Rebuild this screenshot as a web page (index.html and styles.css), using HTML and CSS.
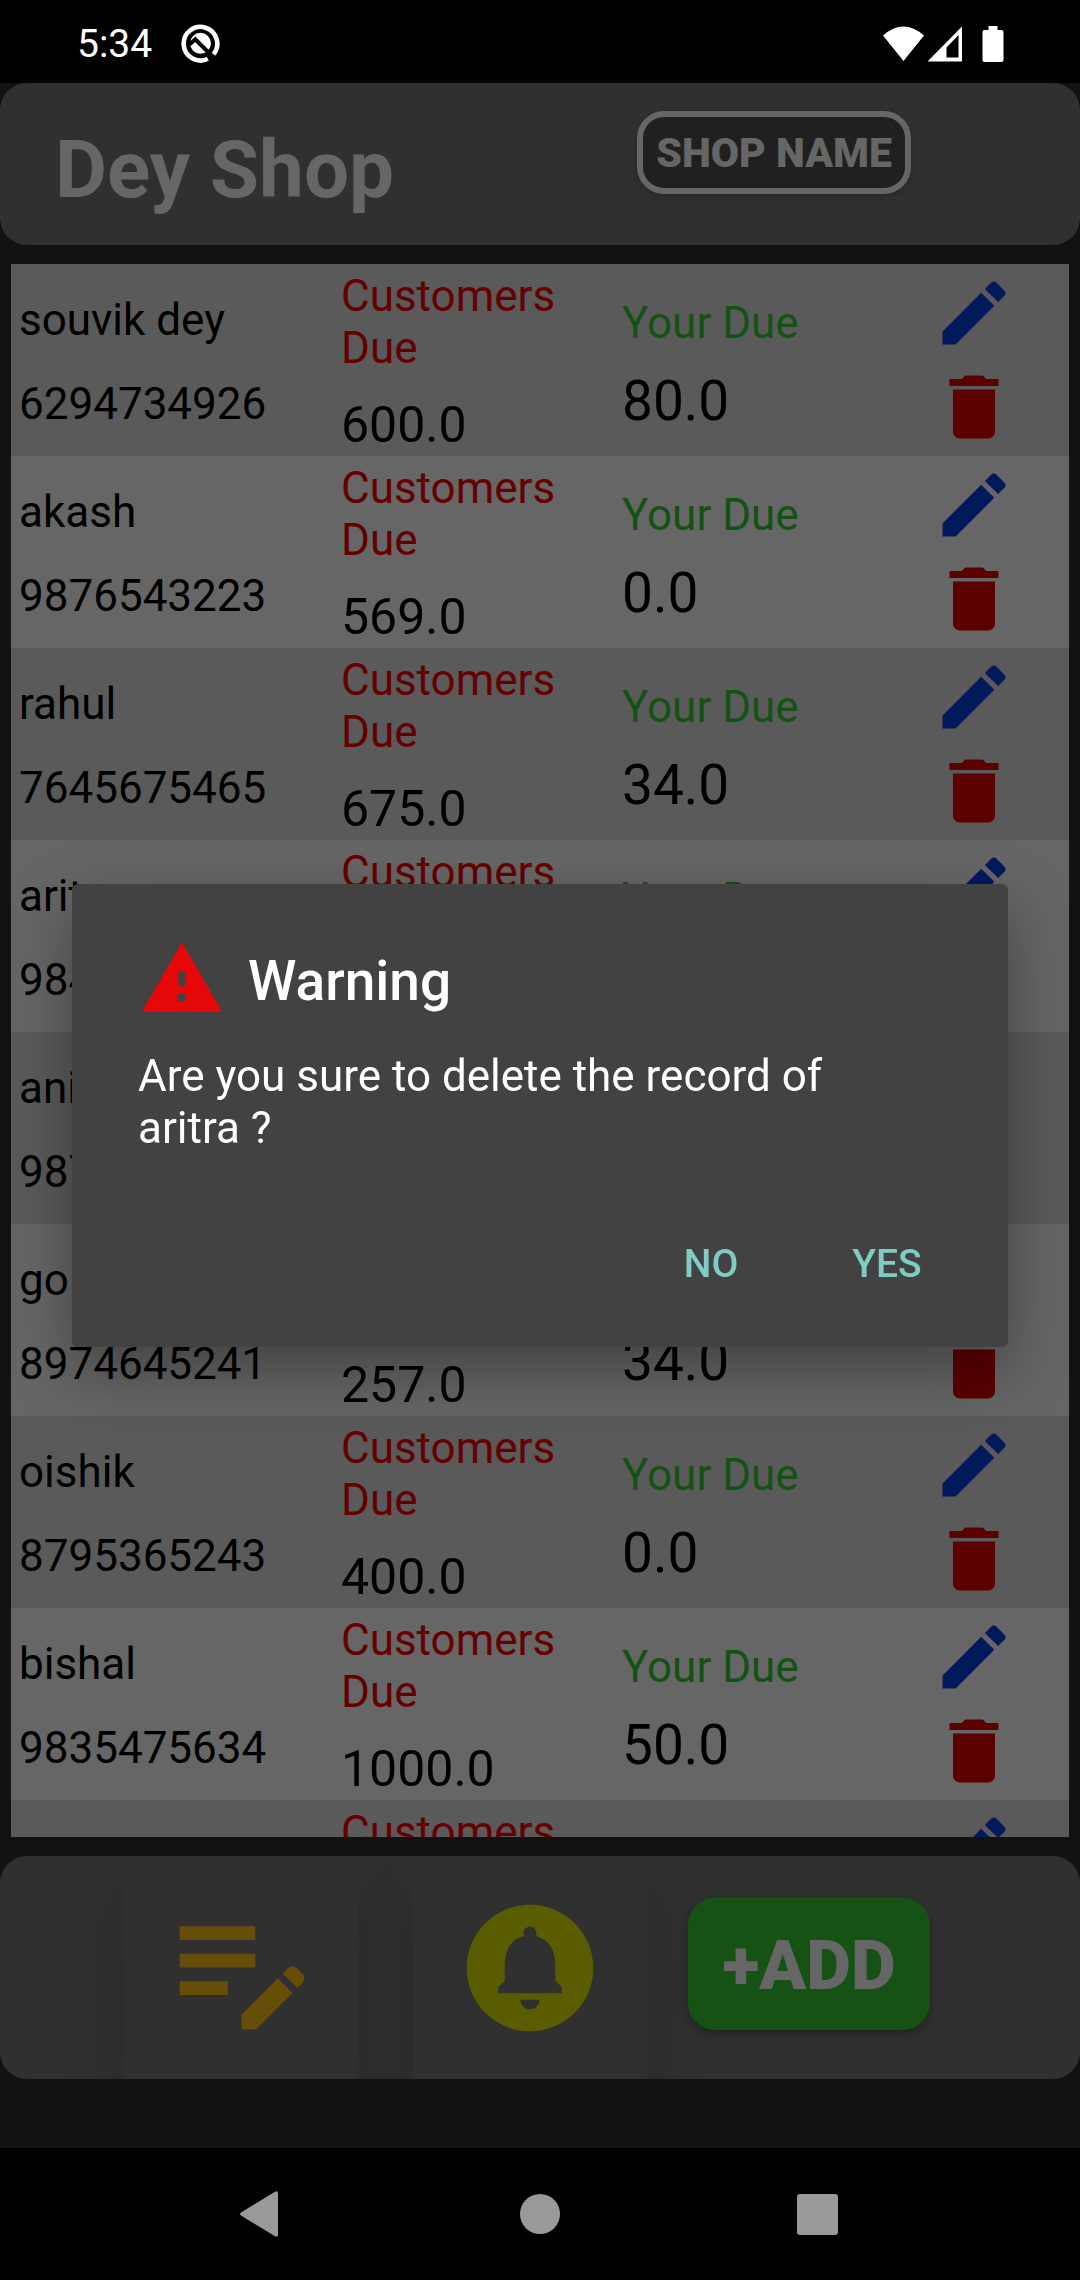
FILE: index.html
```html
<!DOCTYPE html>
<html lang="en">
<head>
<meta charset="utf-8">
<meta name="viewport" content="width=device-width, initial-scale=1">
<title>Dey Shop</title>
<link rel="stylesheet" href="styles.css">
</head>
<body>
<svg class="sprite" aria-hidden="true">
  <symbol id="edit" viewBox="0 0 24 24"><path d="M3 17.25V21h3.75L17.81 9.94l-3.75-3.75L3 17.25zM20.71 7.04c.39-.39.39-1.02 0-1.41l-2.34-2.34c-.39-.39-1.02-.39-1.41 0l-1.83 1.83 3.75 3.75 1.83-1.83z"/></symbol>
  <symbol id="trash" viewBox="0 0 24 24"><path d="M6 19c0 1.1.9 2 2 2h8c1.1 0 2-.9 2-2V7H6v12zM19 4h-3.5l-1-1h-5l-1 1H5v2h14V4z"/></symbol>
</svg>

<div class="status">
  <span class="clock">5:34</span>
  <svg class="status-app" viewBox="0 0 39 39" aria-hidden="true">
    <path d="M32.4 30.4A16.800 16.800 0 1 0 26.800 34.800" fill="none" stroke="#fff" stroke-width="4.600"/>
    <circle cx="19.500" cy="19.300" r="10.500" fill="#fff"/>
    <path d="M8.500 20.500L14.300 15.300L33 34" fill="none" stroke="#000" stroke-width="4"/>
  </svg>
  <svg class="status-signals" viewBox="0 0 121 36" aria-hidden="true">
    <path fill="#fff" d="M0 9.500Q20.500-8.500 41 9.500L20.500 35z"/>
    <path fill="#fff" fill-rule="evenodd" d="M44.500 35.500L79 .5v35zM63.500 21.500v10h12V9z"/>
    <path fill="#fff" d="M105.500 0h9v4h4q2 0 2 2v28q0 2-2 2h-17q-2 0-2-2V6q0-2 2-2h4z"/>
  </svg>
</div>

<div class="app">
  <header class="header">
    <h1 class="title">Dey Shop</h1>
    <button class="shop-name" type="button">SHOP NAME</button>
  </header>

  <main class="list-wrap">
    <ul class="list">
      <li class="row">
        <div class="who"><span>souvik dey</span><span>6294734926</span></div>
        <div class="owed"><span class="label-red">Customers Due</span><span class="amount">600.0</span></div>
        <div class="owing"><span class="label-green">Your Due</span><span class="amount-large">80.0</span></div>
        <div class="actions">
          <button type="button" class="icon-btn edit" aria-label="Edit"><svg><use href="#edit"/></svg></button>
          <button type="button" class="icon-btn trash" aria-label="Delete"><svg><use href="#trash"/></svg></button>
        </div>
      </li>
      <li class="row">
        <div class="who"><span>akash</span><span>9876543223</span></div>
        <div class="owed"><span class="label-red">Customers Due</span><span class="amount">569.0</span></div>
        <div class="owing"><span class="label-green">Your Due</span><span class="amount-large">0.0</span></div>
        <div class="actions">
          <button type="button" class="icon-btn edit" aria-label="Edit"><svg><use href="#edit"/></svg></button>
          <button type="button" class="icon-btn trash" aria-label="Delete"><svg><use href="#trash"/></svg></button>
        </div>
      </li>
      <li class="row">
        <div class="who"><span>rahul</span><span>7645675465</span></div>
        <div class="owed"><span class="label-red">Customers Due</span><span class="amount">675.0</span></div>
        <div class="owing"><span class="label-green">Your Due</span><span class="amount-large">34.0</span></div>
        <div class="actions">
          <button type="button" class="icon-btn edit" aria-label="Edit"><svg><use href="#edit"/></svg></button>
          <button type="button" class="icon-btn trash" aria-label="Delete"><svg><use href="#trash"/></svg></button>
        </div>
      </li>
      <li class="row">
        <div class="who"><span>aritra</span><span>9845612378</span></div>
        <div class="owed"><span class="label-red">Customers Due</span><span class="amount">300.0</span></div>
        <div class="owing"><span class="label-green">Your Due</span><span class="amount-large">0.0</span></div>
        <div class="actions">
          <button type="button" class="icon-btn edit" aria-label="Edit"><svg><use href="#edit"/></svg></button>
          <button type="button" class="icon-btn trash" aria-label="Delete"><svg><use href="#trash"/></svg></button>
        </div>
      </li>
      <li class="row">
        <div class="who"><span>anik</span><span>9876512340</span></div>
        <div class="owed"><span class="label-red">Customers Due</span><span class="amount">450.0</span></div>
        <div class="owing"><span class="label-green">Your Due</span><span class="amount-large">0.0</span></div>
        <div class="actions">
          <button type="button" class="icon-btn edit" aria-label="Edit"><svg><use href="#edit"/></svg></button>
          <button type="button" class="icon-btn trash" aria-label="Delete"><svg><use href="#trash"/></svg></button>
        </div>
      </li>
      <li class="row">
        <div class="who"><span>go das</span><span>8974645241</span></div>
        <div class="owed"><span class="label-red">Customers Due</span><span class="amount">257.0</span></div>
        <div class="owing"><span class="label-green">Your Due</span><span class="amount-large">34.0</span></div>
        <div class="actions">
          <button type="button" class="icon-btn edit" aria-label="Edit"><svg><use href="#edit"/></svg></button>
          <button type="button" class="icon-btn trash" aria-label="Delete"><svg><use href="#trash"/></svg></button>
        </div>
      </li>
      <li class="row">
        <div class="who"><span>oishik</span><span>8795365243</span></div>
        <div class="owed"><span class="label-red">Customers Due</span><span class="amount">400.0</span></div>
        <div class="owing"><span class="label-green">Your Due</span><span class="amount-large">0.0</span></div>
        <div class="actions">
          <button type="button" class="icon-btn edit" aria-label="Edit"><svg><use href="#edit"/></svg></button>
          <button type="button" class="icon-btn trash" aria-label="Delete"><svg><use href="#trash"/></svg></button>
        </div>
      </li>
      <li class="row">
        <div class="who"><span>bishal</span><span>9835475634</span></div>
        <div class="owed"><span class="label-red">Customers Due</span><span class="amount">1000.0</span></div>
        <div class="owing"><span class="label-green">Your Due</span><span class="amount-large">50.0</span></div>
        <div class="actions">
          <button type="button" class="icon-btn edit" aria-label="Edit"><svg><use href="#edit"/></svg></button>
          <button type="button" class="icon-btn trash" aria-label="Delete"><svg><use href="#trash"/></svg></button>
        </div>
      </li>
      <li class="row">
        <div class="who"></div>
        <div class="owed"><span class="label-red">Customers Due</span></div>
        <div class="owing"></div>
        <div class="actions">
          <button type="button" class="icon-btn edit" aria-label="Edit"><svg><use href="#edit"/></svg></button>
        </div>
      </li>
    </ul>
  </main>

  <footer class="toolbar">
    <button type="button" class="tile notes" aria-label="Notes">
      <svg viewBox="0 0 24 24"><path d="M3 10h11v2H3v-2zm0-2h11V6H3v2zm0 8h7v-2H3v2zm15.010-3.130.710-.710c.390-.390 1.020-.390 1.410 0l.710.710c.390.390.390 1.020 0 1.410l-.710.710-2.120-2.120zm-.710.710-5.300 5.300V21h2.120l5.300-5.300-2.120-2.120z"/></svg>
    </button>
    <button type="button" class="tile alerts" aria-label="Notifications">
      <svg viewBox="0 0 24 24"><path d="M12 2C6.480 2 2 6.480 2 12s4.480 10 10 10 10-4.480 10-10S17.520 2 12 2zm0 16.500c-.830 0-1.500-.670-1.500-1.500h3c0 .830-.670 1.500-1.500 1.500zm5-2.500H7v-1l1-1v-2.610C8 9.270 9.030 7.470 11 7v-.500c0-.570.430-1 1-1s1 .430 1 1V7c1.970.470 3 2.280 3 4.390V14l1 1v1z"/></svg>
    </button>
    <button type="button" class="add">+ADD</button>
  </footer>

  <div class="overlay">
    <section class="dialog" role="alertdialog" aria-labelledby="dlg-title" aria-describedby="dlg-text">
      <div class="dialog-head">
        <svg class="warn" viewBox="0 0 24 24" aria-hidden="true"><path d="M1 21h22L12 2 1 21zm12-3h-2v-2h2v2zm0-4h-2v-4h2v4z"/></svg>
        <h2 class="dialog-title" id="dlg-title">Warning</h2>
      </div>
      <p class="dialog-text" id="dlg-text">Are you sure to delete the record of aritra&nbsp;?</p>
      <div class="dialog-actions">
        <button type="button" class="text-btn">NO</button>
        <button type="button" class="text-btn">YES</button>
      </div>
    </section>
  </div>
</div>

<nav class="nav">
  <button type="button" aria-label="Back"><svg viewBox="2 0 44 46"><path d="M3 21.500L37 .8q3-1.500 3 1.500v41.400q0 3-3 1.500L3 24.500q-2-1.500 0-3z"/></svg></button>
  <button type="button" aria-label="Home"><svg viewBox="0 0 44 46"><circle cx="22" cy="23" r="20"/></svg></button>
  <button type="button" aria-label="Recents"><svg viewBox="0 0 44 46"><rect x="1" y="3" width="41" height="41" rx="3"/></svg></button>
</nav>
</body>
</html>
```
FILE: styles.css
```css
* {
  box-sizing: border-box;
}

body {
  margin: 0;
  height: 100vh;
  display: flex;
  flex-direction: column;
  background: #000;
  font-family: Roboto, "Liberation Sans", sans-serif;
}

button {
  padding: 0;
  border: 0;
  background: none;
  font-family: inherit;
  cursor: pointer;
}

svg {
  display: block;
}

.sprite {
  position: absolute;
  width: 0;
  height: 0;
}

/* Status bar */
.status {
  flex: none;
  height: 83px;
  padding: 4px 76px 0 77px;
  display: flex;
  align-items: center;
  color: #fff;
}

.clock {
  font-size: 39px;
  line-height: 46px;
}

.status-app {
  width: 39px;
  height: 39px;
  margin-left: 29px;
}

.status-signals {
  width: 121px;
  height: 36px;
  margin-left: auto;
}

/* App area */
.app {
  position: relative;
  flex: 1;
  min-height: 0;
  display: flex;
  flex-direction: column;
  padding-bottom: 69px;
  background: #121212;
}

.header {
  flex: none;
  height: 162px;
  padding: 28px 169px 0 55px;
  display: flex;
  justify-content: space-between;
  align-items: flex-start;
  border-radius: 27px;
  background: #303030;
}

.title {
  margin: 12px 0 0;
  font-size: 80px;
  line-height: 94px;
  font-weight: 700;
  color: #666;
}

.shop-name {
  height: 83px;
  padding: 0 13px;
  border: 6px solid #666;
  border-radius: 27px;
  background: #202020;
  box-shadow: 0 2px 6px rgba(0, 0, 0, .2);
  color: #666;
  font-size: 41px;
  font-weight: 900;
}

.list-wrap {
  flex: 1;
  min-height: 0;
  margin: 19px 11px;
  overflow-y: auto;
  scrollbar-width: none;
}

.list {
  margin: 0;
  padding: 0;
  list-style: none;
}

.row {
  height: 192px;
  padding-left: 8px;
  display: grid;
  grid-template-columns: 322fr 281fr 310fr 137fr;
  background: #666;
  color: #000;
  font-size: 44px;
  line-height: 52px;
}

.row:nth-child(odd) {
  background: #5a5a5a;
}

.who,
.owed,
.owing,
.actions {
  display: flex;
  flex-direction: column;
  align-items: flex-start;
}

.who {
  padding-top: 30px;
  gap: 32px;
}

.owed {
  padding-top: 6px;
  gap: 22px;
}

.owing {
  padding-top: 33px;
  gap: 20px;
}

.actions {
  padding-top: 7px;
  gap: 10px;
}

.label-red {
  color: #600;
}

.label-green {
  color: #145214;
}

.amount {
  font-size: 50px;
  line-height: 58px;
}

.amount-large {
  font-size: 55px;
  line-height: 64px;
}

.icon-btn svg {
  width: 84px;
  height: 84px;
  fill: currentColor;
}

.edit {
  color: #001a5c;
}

.trash {
  color: #5c0000;
}

/* Bottom toolbar */
.toolbar {
  flex: none;
  height: 223px;
  padding: 0 150px 0 124px;
  display: flex;
  gap: 40px;
  align-items: center;
  overflow: hidden;
  border-radius: 27px;
  background: #303030;
}

.tile {
  width: 234px;
  height: 223px;
  display: grid;
  place-items: center;
  background: #303030;
  box-shadow: 0 40px 60px rgba(0, 0, 0, .14);
}

.notes {
  margin-right: 15px;
}

.notes svg {
  width: 165px;
  height: 165px;
  fill: #664d08;
}

.alerts svg {
  width: 152px;
  height: 152px;
  fill: #5a5c00;
}

.add {
  width: 242px;
  height: 132px;
  margin: 0 0 8px auto;
  padding-top: 4px;
  border-radius: 27px;
  background: #155214;
  box-shadow: 0 4px 8px rgba(0, 0, 0, .3);
  color: #666;
  font-size: 69px;
  font-weight: 900;
}

/* Confirmation dialog, centred over the app area */
.overlay {
  position: absolute;
  inset: 0;
  padding: 0 72px;
  display: flex;
  align-items: center;
}

.dialog {
  width: 100%;
  padding: 51px 33px 17px 66px;
  border-radius: 6px;
  background: #424242;
  box-shadow: 0 24px 64px rgba(0, 0, 0, .35);
  color: #fff;
}

.dialog-head {
  display: flex;
  align-items: center;
  gap: 22px;
}

.warn {
  width: 88px;
  height: 88px;
  fill: #e60808;
}

.dialog-title {
  margin: 4px 0 0;
  font-size: 55px;
  line-height: 64px;
  font-weight: 500;
}

.dialog-text {
  margin: 27px 33px 0 0;
  font-size: 44px;
  line-height: 52px;
}

.dialog-actions {
  margin-top: 44px;
  display: flex;
  justify-content: flex-end;
}

.text-btn {
  width: 176px;
  height: 132px;
  color: #80cbc4;
  font-size: 39px;
  font-weight: 500;
}

/* System navigation */
.nav {
  flex: none;
  height: 132px;
  padding: 0 123px;
  display: grid;
  grid-template-columns: repeat(3, 1fr);
}

.nav button {
  display: grid;
  place-items: center;
}

.nav svg {
  width: 44px;
  height: 46px;
  fill: #999;
}
```
